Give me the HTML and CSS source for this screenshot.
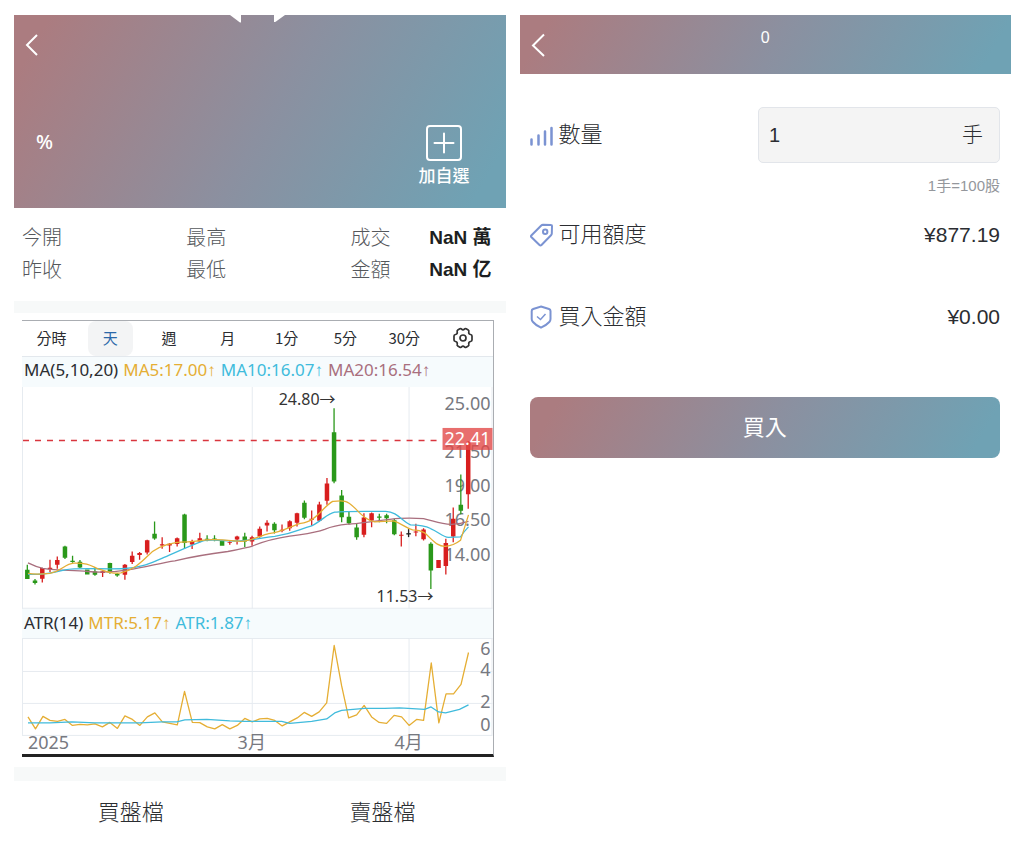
FILE: index.html
```
<!DOCTYPE html>
<html lang="zh-Hant">
<head>
<meta charset="utf-8">
<meta name="viewport" content="width=device-width, initial-scale=1">
<title>買入</title>
<link rel="stylesheet" href="styles.css">
</head>
<body>
<main class="screens">
  <section class="screen">
    <header class="hero">
      <div class="hero-top">
        <button class="back" type="button" aria-label="返回">
          <svg width="14" height="24" viewBox="0 0 14 24"><path d="M12 2 2 12l10 10"/></svg>
        </button>
        <svg class="arrows" width="60" height="8" viewBox="0 0 60 8"><path d="M0 0h11v7.500q-1 .3-3-1.500zM44 0h11l-9 6.500q-2 1-2 0z"/></svg>
      </div>
      <div class="hero-bottom">
        <span class="percent">%</span>
        <button class="watch" type="button">
          <svg width="36" height="36" viewBox="0 0 36 36"><rect x="1" y="1" width="34" height="34" rx="3"/><path d="M18 8.500v19M8.500 18h19"/></svg>
          <span>加自選</span>
        </button>
      </div>
    </header>

    <div class="stats">
      <div>今開</div><div>最高</div><div class="pair"><span>成交</span><strong>NaN 萬</strong></div>
      <div>昨收</div><div>最低</div><div class="pair"><span>金額</span><strong>NaN 亿</strong></div>
    </div>
    <div class="band"></div>

    <div class="chart">
      <nav class="periods">
        <button type="button">分時</button>
        <button type="button" class="active">天</button>
        <button type="button">週</button>
        <button type="button">月</button>
        <button type="button">1分</button>
        <button type="button">5分</button>
        <button type="button">30分</button>
        <button type="button" aria-label="設定">
          <svg class="gear" width="22" height="22" viewBox="0 0 22 22"><path d="M7.800 1.800Q9 1.200 9.600 2.200q1.400 1.500 2.800 0 .6-1 1.800-.4l2 1.200q1 .6.600 1.700-.5 2.300 1.700 2.800 1.500.1 1.500 1.400v4.200q0 1.300-1.500 1.400-2.200.5-1.700 2.800.4 1.100-.6 1.700l-2 1.200q-1.200.6-1.800-.4-1.400-1.500-2.800 0-.6 1-1.800.4l-2-1.200q-1-.6-.6-1.700.5-2.300-1.700-2.800Q2 14.400 2 13.100V8.900Q2 7.600 3.500 7.500 5.700 7 5.200 4.700 4.800 3.600 5.800 3z"/><circle cx="11" cy="11" r="3"/></svg>
        </button>
      </nav>

      <div class="legend"><span>MA(5,10,20)</span><span class="gold">MA5:17.00↑</span><span class="sky">MA10:16.07↑</span><span class="plum">MA20:16.54↑</span></div>

      <svg class="plot" viewBox="22 387 471 222">
        <path class="grid" d="M22.500 387V609M252.500 387V609M409.500 387V609M492.500 387V609M22 608.500H493"/>
        <g class="axis" text-anchor="end">
          <text x="491" y="410">25.00</text><text x="491" y="458">21.50</text><text x="491" y="492">19.00</text><text x="491" y="526">16.50</text><text x="491" y="561">14.00</text>
        </g>
        <path class="last" d="M23 440.500H443"/>
        <g class="up">
          <path class="wick" d="M42.300 568V582.700M50 560V572.300M57.300 556.700V569M102.700 570.700V577.300M125 564.300V580M132.300 551.700V564.300M139.700 552.300V560M147.300 540V554.700M162.300 537.300V549M169.700 543.300V552.300M177.300 537.700V546.700M192.300 540V549.300M200 533V542.300M230 541.300V545M237.300 536V544.700M252.300 536V546M260 526.700V538M267.300 520.300V531.700M282.300 524.700V532.300M290 520.300V531M297.300 513V526.700M312 510.700V526M319.700 502V522M327.300 478V505M364.300 513.300V537.300M372 512.700V527.300M401.700 531.700V546.700M416.300 524V536.300M424 528.300V540.700M446.300 539V574.700M453.700 507.700V542.300M468.700 441V509"/>
          <path class="bar" d="M42.300 568.300V579M50 568V569.500M57.300 560.300V565M102.700 571.500V573.300M125 565V575M132.300 556V562.300M139.700 553.300V555.300M147.300 540.300V552.700M162.300 544.500V545.700M169.700 544V545.700M177.300 538.300V544.300M192.300 541.300V544.700M200 538.300V541.700M230 542.300V543.300M237.300 536.700V539.700M252.300 537.300V541.700M260 529V536.700M267.300 523V525.700M282.300 530V531M290 521.300V528.300M297.300 513.300V523M312 519V520M319.700 504.700V521M327.300 483.700V501M364.300 517.700V535M372 513.300V520.700M401.700 535V536M416.300 531.700V532.700M424 529.700V539.300M439 560.300V568.300M446.300 543.300V566.300M453.700 519V536.700M468.700 441.700V494.300"/>
        </g>
        <g class="down">
          <path class="wick" d="M27.300 565V579M35 579.300V584.700M65 546V559.300M72.600 556V563M80 560.300V568.300M95 567.300V576M110 563V574M117.300 573.300V577M154.700 521.700V540M184.700 514V549.300M207.300 535.300V541.300M214.700 535.300V541.300M245 533V547.300M274.700 522.300V533.700M304.700 500.700V519.300M334.400 408.300V483.300M342 490V522.300M349.300 511.700V524.700M357 523.300V540M379.700 514V522.300M387 514V523.300M394.700 519V535.300M431.300 542.300V589.300M461.300 474.700V514.300"/>
          <path class="bar" d="M27.300 570V579.300M35 580.700V583.300M65 546.700V558M72.600 561V562.300M80 562V567.700M87.300 569.700V574.700M95 571.700V575M110 563.300V572.700M117.300 574V575.700M154.700 534V538.700M184.700 514.700V543.300M207.300 539V540M214.700 538.700V539.700M222.300 540.700V546M245 536.700V541.700M274.700 524V530.300M304.700 503V518M334.400 432.300V481.700M342 495.700V517.300M349.300 517V523.300M357 527.700V537.300M379.700 516.700V518M387 515.300V518.300M394.700 520.300V534.300M431.300 544V570.700M461.300 505V511"/>
        </g>
        <g class="flat"><path class="wick" d="M409 529.300V537.300"/><path class="bar" d="M409 533.300V534.700"/></g>
        <path class="line plum-line" d="M28 563Q36 567 43 568.500C60 571 72 570 88 571.700 103 573 116 572 128 570 145 568 160 563 175 561 190 557.500 210 554 228 551.700 239 550 245 548 252 546.500 265 541 275 538.500 290 536.300 305 534 315 533.300 325 529.500 336 525 342 525 352 524 367 523 385 519.500 400 518.500Q412 518 424 518.700C434 521 442 524.700 452 524.500Q461 524 469 521.500"/>
        <path class="line sky-line" d="M28 574.500C42 575.500 53 573 65 570 80 567.500 107 570 125 568.700 140 568.500 151 563 162 558.500 177 552 190 546 202 541.500 212 538.500 225 542 240 541 257 540 262 537.500 275 536.500 295 533.500 300 529 312 526 322 521 328 513.500 335 512.300 345 511 375 511.500 386 511.500 398 512 402 521 411 525Q424 525 431 528.700C439 532 443 537 449 537.500L461 537Q465 531 469 527"/>
        <path class="line gold-line" d="M28 573.500Q36 575 50 573.500C63 571 64 564 74 563.300 88 563 91 566 98 569 107 572 113 574.500 121 573 133 570 140 564 148 556 155 548 165 544.500 177 542.500 190 542 195 542 202 540.500 213 538.700 228 540.500 241 541.500 252 541 261 535.500 269 533.700 283 532.500 291 526 301 523.500 316 522.500 323 507 333 501.500 344 500.500 347 500 355 508 361 514 366 520 375 522L394 521C403 524 406 528 413 530Q420 530 425 533C434 541 438 547 446 546.500Q454 546 461 540.500L469 515"/>
        <rect class="tag" x="443" y="428" width="50" height="22"/>
        <text class="tag-text" x="491" y="445" text-anchor="end">22.41</text>
        <text class="mark" x="279" y="405">24.80→</text>
        <text class="mark" x="377" y="602">11.53→</text>
      </svg>

      <div class="legend lower"><span>ATR(14)</span><span class="gold">MTR:5.17↑</span><span class="sky">ATR:1.87↑</span></div>

      <svg class="plot" viewBox="22 638 471 116">
        <path class="grid" d="M22 638.500H493M22 671.500H493M22 703.500H493M22 735.500H493M22.500 638V735M252.500 638V735M409.500 638V735M492.500 638V735"/>
        <g class="axis">
          <g text-anchor="end"><text x="491" y="655">6</text><text x="491" y="676">4</text><text x="491" y="708">2</text><text x="491" y="731">0</text></g>
          <text x="28" y="749">2025</text><text x="252" y="749" text-anchor="middle">3月</text><text x="409" y="749" text-anchor="middle">4月</text>
        </g>
        <path class="line gold-line" d="M28 717 35.500 729 43 716.500 50 720.500 57.500 721.500 65 719.500 72.500 725.500 80 724.500 87.500 725 95 724 102.500 727 110 722.500 117.500 728.500 125 716 132.500 719.500 140 725.500 147.500 717 155 713 162.500 722 170 723.500 177.500 725 184.700 691.500 192.500 722.500 200 722.700 207.500 727 215 729 222.500 724.700 230 729 237.500 725.500 245 718.500 252.500 722 260 719 267.500 718.500 275 720.500 282.500 726 290 722 297.500 718 304.500 712.500 312 716.500 319.500 712 327 703 334.500 645.500 342 686 349 718 357 715 364.500 705.500 372 717 379.500 722.500 387 723.500 394.500 715.500 402 717 409.500 725.500 417 719.500 424 720.500 431.700 663 439.300 723 446.500 694 454 694 461.500 684.500 469 652.500"/>
        <path class="line sky-line" d="M28 723H50L72 722 95 723H140L162 722H177L185 720 207 719.500 230 721 245 721.500H282L290 723.500 312 721.500 327 719 335 713 342 710.500 365 708.500H385L400 708 417 709 425 709.500 431.500 707 439 712 446 713 460 709.500 469 705"/>
      </svg>
    </div>

    <div class="band second"></div>
    <div class="books"><span>買盤檔</span><span>賣盤檔</span></div>
  </section>

  <section class="screen">
    <header class="bar-head">
      <button class="back" type="button" aria-label="返回">
        <svg width="14" height="24" viewBox="0 0 14 24"><path d="M13 1.500 2 12.500l11 10.500"/></svg>
      </button>
      <h1>0</h1>
    </header>
    <form class="order">
      <div class="row">
        <label class="name" for="qty">
          <svg width="24" height="24" viewBox="0 0 24 24" class="ico bars"><path d="M1.500 16.500v5M8.500 12.500v9M15 8.500v13M21.500 5v16.500"/></svg>數量
        </label>
        <span class="field"><input id="qty" type="text" value="1"><span>手</span></span>
      </div>
      <p class="hint">1手=100股</p>
      <div class="row credit">
        <span class="name">
          <svg width="24" height="24" viewBox="0 0 24 24" class="ico"><path d="M1.300 12.500 11 2.700Q12 1.700 13 1.700L21 1.900q1 0 1 1L21.800 10.500q0 1-.8 1.800L11.500 22Q10.500 23 9.500 22L1.300 14q-.7-.8 0-1.500z"/><circle cx="15.200" cy="8.800" r="2.200"/></svg>可用額度
        </span>
        <span class="amount">¥877.19</span>
      </div>
      <div class="row total">
        <span class="name">
          <svg width="24" height="24" viewBox="0 0 24 24" class="ico"><path d="M11 1.500 19 4q1.500.5 1.500 2v8q0 1.700-1.200 3Q16 20.500 11 22.700 6 20.500 3 17 1.700 15.700 1.700 14V6q0-1.500 1.500-2z"/><path class="tick" d="m7 11.500 3.500 3 5-5.500"/></svg>買入金額
        </span>
        <span class="amount">¥0.00</span>
      </div>
      <button class="buy" type="button">買入</button>
    </form>
  </section>
</main>
</body>
</html>
```
FILE: styles.css
```
:root {
  --sweep: linear-gradient(120deg, #ab7c80 6%, #8b90a0 52%, #6fa2b4 94%);
  --gold: #e5ae34;
  --sky: #40bbdc;
  --plum: #a96f7e;
}
* { box-sizing: border-box; }
body {
  margin: 0;
  background: #fff;
  color: #2b2d31;
  font-family: "Liberation Sans", "Noto Sans CJK TC", sans-serif;
}
button, input { font: inherit; color: inherit; }
button { border: 0; padding: 0; background: none; cursor: pointer; }
svg { display: block; }
.screens {
  display: grid;
  grid-template-columns: 1fr 1fr;
  gap: 14px;
  padding: 15px 13px 16px 14px;
}

.hero {
  display: flex;
  flex-direction: column;
  justify-content: space-between;
  min-height: 193px;
  background: var(--sweep);
  color: #fff;
}
.hero-top { display: grid; grid-template-columns: 1fr auto 1fr; }
.back { justify-self: start; padding: 18px 11px; }
.back path { fill: none; stroke: #fff; stroke-width: 2; }
.arrows { fill: #fff; }
.hero-bottom {
  display: flex;
  justify-content: space-between;
  padding: 0 36px 19px 22px;
}
.percent { font-family: "Noto Sans", sans-serif; font-size: 20px; font-weight: 500; line-height: 34px; }
.watch {
  display: flex;
  flex-direction: column;
  align-items: center;
  gap: 4px;
  font-size: 17px;
  font-weight: 500;
  line-height: 24px;
}
.watch svg { fill: none; stroke: #fff; stroke-width: 2; stroke-linecap: round; }

.stats {
  display: grid;
  grid-template-columns: 1fr 1fr 155px;
  padding: 14px 0 15px 8px;
  font-size: 20px;
  font-weight: 300;
  line-height: 32px;
  color: #55585c;
}
.pair { display: flex; justify-content: space-between; padding-right: 14px; }
.pair strong { font-size: 19px; font-weight: 700; color: #1d1f22; }
.band { height: 12px; background: #f7f9f9; }

.chart {
  margin: 7px 12px 0 8px;
  border: solid #aaadb2;
  border-width: 1px 1px 0 0;
  border-bottom: 3px solid #222;
  font-family: "Noto Sans", "Liberation Sans", "Noto Sans CJK TC", sans-serif;
}
.periods { display: grid; grid-template-columns: repeat(8, 1fr); }
.periods button {
  display: flex;
  align-items: center;
  justify-content: center;
  justify-self: center;
  width: 45px;
  height: 35px;
  border-radius: 8px;
  font-family: "Noto Sans CJK TC", sans-serif;
  font-size: 15px;
  line-height: 20px;
  padding-bottom: 2px;
}
.periods .active { background: #f3f4f5; color: #2b68a8; }
.gear { fill: none; stroke: #333; stroke-width: 1.700px; }
.legend {
  display: flex;
  gap: 5px;
  padding-left: 2px;
  height: 31px;
  border-top: 1px solid #e3e8ed;
  background: #f6fbfd;
  font-size: 17px;
  line-height: 26px;
  white-space: nowrap;
}
.lower { border-top: 0; height: 29px; line-height: 28px; }
.gold { color: var(--gold); }
.sky { color: var(--sky); }
.plum { color: var(--plum); }
.plot { width: 100%; height: auto; }
.grid { fill: none; stroke: #e6ebf0; }
.axis { fill: #777980; font-size: 18px; }
.last { stroke: #d9363e; stroke-width: 1.500px; stroke-dasharray: 6 6; }
.wick { stroke-width: 1.300px; }
.bar { stroke-width: 4.500px; stroke-linecap: butt; }
.up { stroke: #d81e1e; }
.down { stroke: #2a981a; }
.flat { stroke: #222; }
.line { fill: none; stroke-width: 1.300px; stroke-linejoin: round; }
.gold-line { stroke: var(--gold); }
.sky-line { stroke: var(--sky); }
.plum-line { stroke: var(--plum); }
.tag { fill: #e24a48; fill-opacity: .8; }
.tag-text { fill: #fff; font-size: 18px; }
.mark { fill: #333; font-family: "Noto Sans", "Noto Sans CJK TC", sans-serif; font-size: 16px; }

.second { margin-top: 10px; height: 14px; }
.books {
  display: grid;
  grid-template-columns: 1fr 1fr;
  font-size: 22px;
  font-weight: 300;
  line-height: 32px;
  padding-top: 16px;
  text-align: center;
}
.books span:first-child { padding-right: 12px; }

.bar-head {
  display: grid;
  grid-template-columns: 1fr auto 1fr;
  height: 59px;
  background: var(--sweep);
  color: #fff;
}
.bar-head h1 { margin: 0; font-size: 16px; font-weight: 400; line-height: 45px; }
.order { padding: 33px 11px 0 10px; font-size: 22px; line-height: 32px; }
.row { display: flex; align-items: center; justify-content: space-between; }
.name { display: flex; align-items: center; gap: 5px; font-weight: 300; }
.ico { fill: none; stroke: #7b93d2; stroke-width: 2; }
.bars { stroke-width: 2.500px; stroke-linecap: round; }
.tick { stroke-width: 1.500px; }
.field {
  display: flex;
  align-items: center;
  width: 242px;
  height: 56px;
  padding: 0 16px 0 10px;
  border: 1px solid #e2e5ea;
  border-radius: 5px;
  background: #f4f4f4;
  font-size: 21px;
  font-weight: 300;
}
.field input {
  flex: 1;
  min-width: 0;
  padding: 0;
  border: 0;
  background: none;
  font-size: 20px;
  font-weight: 400;
}
.hint {
  margin: 11px 0 0;
  text-align: right;
  font-size: 15px;
  line-height: 24px;
  color: #94979c;
}
.credit { margin-top: 21px; }
.total { margin-top: 50px; }
.amount { font-size: 21px; }
.buy {
  display: block;
  width: 100%;
  height: 61px;
  margin-top: 64px;
  border-radius: 8px;
  background: var(--sweep);
  color: #fff;
}
```
